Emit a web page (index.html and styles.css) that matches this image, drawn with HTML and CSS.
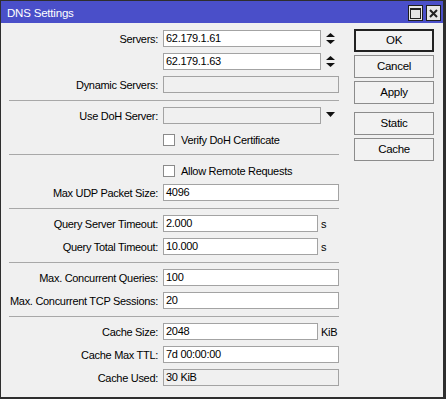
FILE: index.html
```html
<!DOCTYPE html>
<html>
<head>
<meta charset="utf-8">
<link rel="stylesheet" href="styles.css">
</head>
<body>
<div class="window">
  <div class="titlebar">
    <span class="title">DNS Settings</span>
    <div class="tbtns">
      <span class="tbtn"><svg width="11" height="11" viewBox="0 0 11 11"><rect x="0.5" y="0.5" width="10" height="10" fill="none" stroke="#222" stroke-width="1"/><rect x="0" y="0" width="11" height="2" fill="#222"/></svg></span>
      <span class="tbtn"><svg width="9" height="9" viewBox="0 0 9 9"><path d="M1 1 L8 8 M8 1 L1 8" stroke="#222" stroke-width="2"/></svg></span>
    </div>
  </div>
  <div class="content">
    <div class="form">
      <div class="section">
        <div class="lbl">Servers:</div>
        <div class="field"><div class="input w158">62.179.1.61</div><svg class="spin" width="9" height="11" viewBox="0 0 9 11"><polygon points="0,4 4.5,0 9,4" fill="#111"/><polygon points="0,7 9,7 4.5,11" fill="#111"/></svg></div>
        <div class="lbl"></div>
        <div class="field"><div class="input w158">62.179.1.63</div><svg class="spin" width="9" height="11" viewBox="0 0 9 11"><polygon points="0,4 4.5,0 9,4" fill="#111"/><polygon points="0,7 9,7 4.5,11" fill="#111"/></svg></div>
        <div class="lbl">Dynamic Servers:</div>
        <div class="field"><div class="input disabled w176"></div></div>
      </div>
      <div class="sep"></div>
      <div class="section">
        <div class="lbl">Use DoH Server:</div>
        <div class="field"><div class="input disabled w158"></div><svg class="drop" width="9" height="5" viewBox="0 0 9 5"><polygon points="0,0 9,0 4.5,5" fill="#111"/></svg></div>
        <div class="lbl"></div>
        <div class="field"><span class="check"></span><span class="ctext">Verify DoH Certificate</span></div>
      </div>
      <div class="sep"></div>
      <div class="section">
        <div class="lbl"></div>
        <div class="field"><span class="check"></span><span class="ctext">Allow Remote Requests</span></div>
        <div class="lbl">Max UDP Packet Size:</div>
        <div class="field"><div class="input w176">4096</div></div>
      </div>
      <div class="sep"></div>
      <div class="section">
        <div class="lbl">Query Server Timeout:</div>
        <div class="field"><div class="input w155">2.000</div><span class="unit">s</span></div>
        <div class="lbl">Query Total Timeout:</div>
        <div class="field"><div class="input w155">10.000</div><span class="unit">s</span></div>
      </div>
      <div class="sep"></div>
      <div class="section">
        <div class="lbl">Max. Concurrent Queries:</div>
        <div class="field"><div class="input w176">100</div></div>
        <div class="lbl">Max. Concurrent TCP Sessions:</div>
        <div class="field"><div class="input w176">20</div></div>
      </div>
      <div class="sep"></div>
      <div class="section">
        <div class="lbl">Cache Size:</div>
        <div class="field"><div class="input w155">2048</div><span class="unit">KiB</span></div>
        <div class="lbl">Cache Max TTL:</div>
        <div class="field"><div class="input w176">7d 00:00:00</div></div>
        <div class="lbl">Cache Used:</div>
        <div class="field"><div class="input disabled w176">30 KiB</div></div>
      </div>
    </div>
    <div class="buttons">
      <div class="btn default">OK</div>
      <div class="btn">Cancel</div>
      <div class="btn">Apply</div>
      <div class="btn gap">Static</div>
      <div class="btn">Cache</div>
    </div>
  </div>
</div>
</body>
</html>
```
FILE: styles.css
```css
* { box-sizing: border-box; }
html, body { margin: 0; padding: 0; }
body {
  font-family: "Liberation Sans", Arial, sans-serif;
  font-size: 11px;
  letter-spacing: -0.3px;
  color: #000;
  background: #f0f0f0;
}
.window {
  width: 446px;
  height: 399px;
  border-style: solid;
  border-color: #2e2e2e;
  border-width: 1px 3px 2px 1px;
  background: #f0f0f0;
  display: flex;
  flex-direction: column;
}
.titlebar {
  height: 22px;
  background: #4a4fc9;
  display: flex;
  justify-content: space-between;
  align-items: flex-start;
  padding-left: 6px;
  flex: none;
}
.title {
  color: #fff;
  font-size: 11.5px;
  letter-spacing: -0.2px;
  line-height: 19px;
  padding-top: 3px;
}
.tbtns {
  display: flex;
  gap: 3px;
  margin-top: 4px;
  margin-right: 2px;
}
.tbtn {
  width: 15px;
  height: 16px;
  background: #e6e6e6;
  border: 1px solid #1e1e1e;
  display: flex;
  align-items: center;
  justify-content: center;
}
.content {
  display: flex;
  flex: 1;
}
.form {
  width: 338px;
  padding-left: 8px;
  padding-top: 7px;
}
.section {
  display: grid;
  grid-template-columns: 149px 176px;
  column-gap: 5px;
  row-gap: 6px;
}
.lbl {
  height: 17px;
  line-height: 16px;
  padding-top: 1px;
  text-align: right;
  white-space: nowrap;
}
.field {
  height: 17px;
  display: flex;
  align-items: center;
}
.input {
  height: 17px;
  background: #fff;
  border: 1px solid #a3a3a3;
  line-height: 15px;
  padding: 0 0 0 2px;
  white-space: nowrap;
  overflow: hidden;
}
.input.disabled { background: #f0f0f0; }
.w176 { width: 176px; }
.w158 { width: 158px; }
.w155 { width: 155px; }
.spin { margin-left: 5px; }
.drop { margin-left: 5px; margin-top: -3px; }
.unit { margin-left: 3px; line-height: 16px; padding-top: 1px; }
.check {
  width: 12px;
  height: 12px;
  background: #fff;
  border: 1px solid #8a8a8a;
  align-self: flex-start;
  margin-top: 4px;
  flex: none;
}
.ctext {
  margin-left: 6px;
  line-height: 16px;
  padding-top: 3px;
  white-space: nowrap;
}
.sep {
  height: 1px;
  width: 330px;
  background: #a8a8a8;
  margin: 7px 0 6px;
}
.buttons {
  margin-left: 15px;
  padding-top: 6px;
  display: flex;
  flex-direction: column;
  gap: 3px;
}
.btn {
  width: 80px;
  height: 23px;
  border: 1px solid #8c8c8c;
  background: #f2f2f2;
  text-align: center;
  line-height: 20px;
  font-size: 11.5px;
}
.btn.default { border: 2px solid #222; line-height: 19px; }
.btn.gap { margin-top: 5px; }
```
